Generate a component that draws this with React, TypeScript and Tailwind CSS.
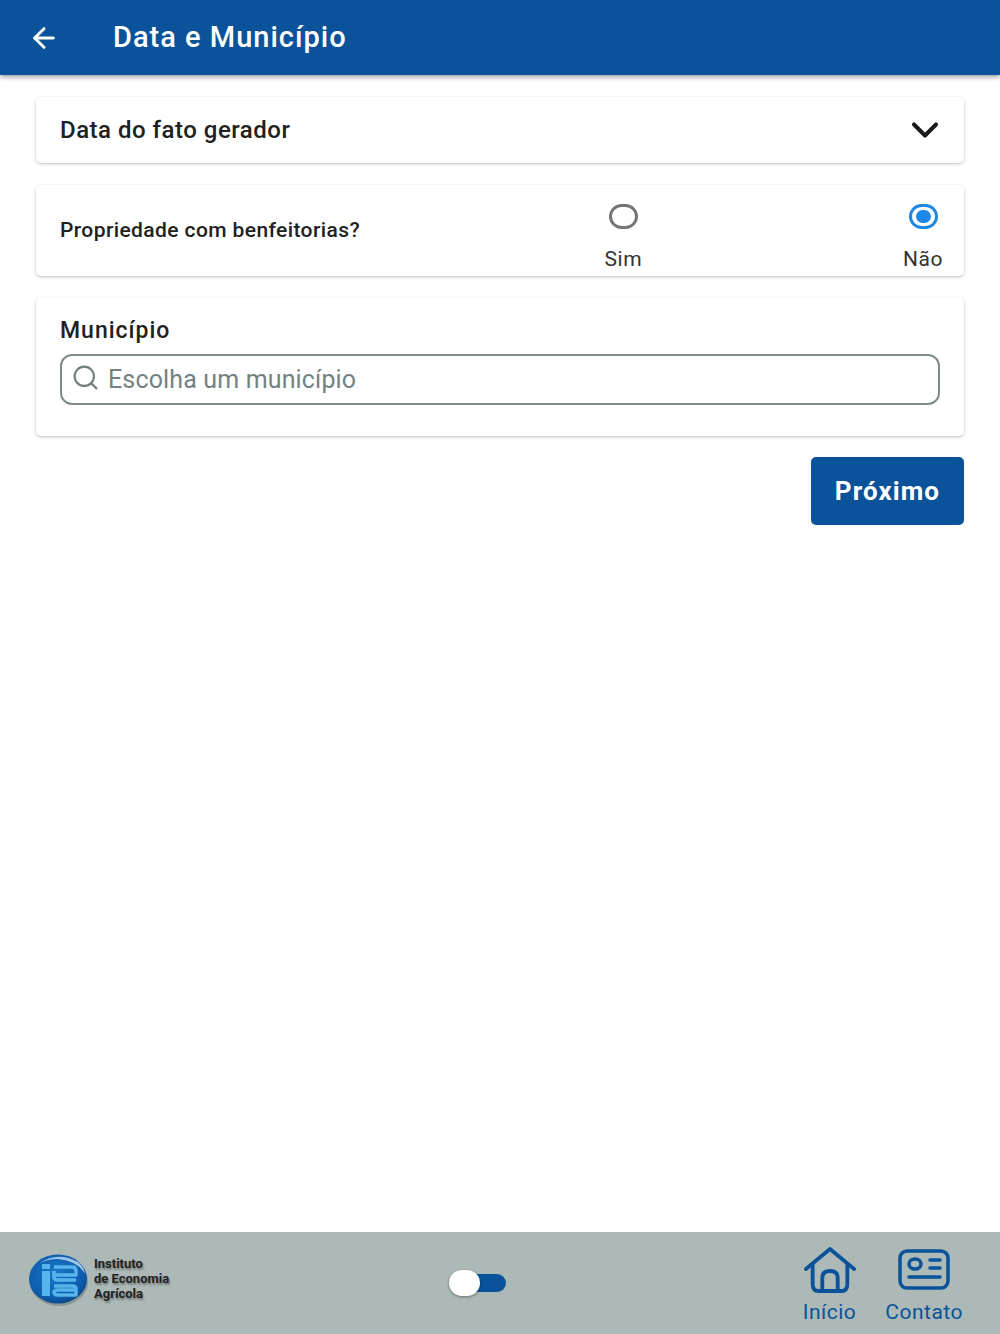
import { ArrowLeft, ChevronDown, Search } from 'lucide-react'

function Radio({ label, checked }: { label: string; checked?: boolean }) {
  return (
    <div className="flex flex-col items-center">
      {checked ? (
        <div className="w-[29px] h-[25px] rounded-full border-[3px] border-[#1e88e5] flex items-center justify-center">
          <div className="w-[15px] h-[13px] rounded-full bg-[#1e88e5]" />
        </div>
      ) : (
        <div className="w-[29px] h-[25px] rounded-full border-[3px] border-[#757575]" />
      )}
      <span className="mt-[18px] text-[21px] leading-[24px] tracking-[0.5px] text-[#333]">{label}</span>
    </div>
  )
}

function Logo() {
  return (
    <svg width="62" height="54" viewBox="0 0 62 54">
      <defs>
        <radialGradient id="ball" cx="45%" cy="40%" r="65%">
          <stop offset="0%" stopColor="#1a78c8" />
          <stop offset="75%" stopColor="#0d5cab" />
          <stop offset="100%" stopColor="#0a3f7c" />
        </radialGradient>
      </defs>
      <ellipse cx="31" cy="29" rx="29" ry="24" fill="#5f6d6b" opacity="0.45" />
      <ellipse cx="30" cy="26" rx="29" ry="24.5" fill="url(#ball)" />
      <path d="M12 10 Q30 -2 50 9 Q56 14 57 21 Q50 8 30 6 Q20 6 12 10Z" fill="#9cc4e8" />
      <g fill="none" stroke="#58b4ec" strokeWidth="3.5" strokeLinejoin="round">
        <path d="M26 14 H44 Q48 14 48 18 V22 H26 M26 18 V24 Q26 27 30 27 H48" />
        <path d="M26 33 H44 Q48 33 48 36 V42 H30 Q26 42 26 39 Q26 37 30 37 H48" />
      </g>
      <g fill="#58b4ec">
        <rect x="14" y="11" width="8" height="5" />
        <rect x="14" y="18" width="8" height="25" />
      </g>
    </svg>
  )
}

export default function App() {
  return (
    <div className="w-[1000px] h-[1334px] bg-white flex flex-col font-['Roboto',sans-serif] overflow-hidden">
      <header className="h-[75px] shrink-0 bg-[#0a5299] flex items-center pl-[28px] shadow-[0_2px_5px_rgba(0,0,0,0.4)] z-10">
        <ArrowLeft className="w-[32px] h-[32px] text-white" strokeWidth={2.2} />
        <h1 className="ml-[53px] text-[29px] leading-none font-medium text-white tracking-[1px]">Data e Município</h1>
      </header>

      <main className="flex-1 px-[36px] pt-[22px] flex flex-col">
        <section className="h-[66px] rounded-[5px] bg-white shadow-[0_1px_3px_rgba(0,0,0,0.25)] flex items-center justify-between pl-[24px] pr-[17px]">
          <span className="text-[24px] font-medium text-[#212121] tracking-[0.5px]">Data do fato gerador</span>
          <ChevronDown className="w-[44px] h-[44px] text-[#1a1a1a]" strokeWidth={2.2} />
        </section>

        <section className="mt-[22px] h-[91px] rounded-[5px] bg-white shadow-[0_1px_3px_rgba(0,0,0,0.25)] flex items-center justify-between pl-[24px] pr-[21px]">
          <span className="text-[21px] font-medium text-[#212121] tracking-[0.4px]">Propriedade com benfeitorias?</span>
          <div className="flex items-start gap-[261px] pt-[14px]">
            <Radio label="Sim" />
            <Radio label="Não" checked />
          </div>
        </section>

        <section className="mt-[22px] h-[138px] rounded-[5px] bg-white shadow-[0_1px_3px_rgba(0,0,0,0.25)] px-[24px] pt-[18px]">
          <h2 className="text-[23px] leading-[30px] font-medium text-[#212121] tracking-[1px]">Município</h2>
          <div className="mt-[8px] h-[51px] rounded-[12px] border-2 border-[#7d8c8a] flex items-center pl-[9px]">
            <Search className="w-[29px] h-[29px] text-[#74827f] -mt-[5px]" strokeWidth={1.8} />
            <span className="ml-[8px] text-[25px] tracking-[0.15px] text-[#74827f]">Escolha um município</span>
          </div>
        </section>

        <div className="mt-[21px] flex justify-end">
          <button className="w-[153px] h-[68px] rounded-[5px] bg-[#0a5299] text-white text-[26px] font-bold tracking-[1.1px]">Próximo</button>
        </div>
      </main>

      <footer className="h-[102px] shrink-0 bg-[#adb9b7] flex items-center pl-[28px] pr-[37px]">
        <div className="w-[421px] flex items-center -mt-[6px]">
          <Logo />
          <div className="ml-[4px] mb-[4px] text-[13px] leading-[15px] font-bold text-[#222] [text-shadow:1px_2px_2px_rgba(0,0,0,0.35)]">
            <div>Instituto</div>
            <div>de Economia</div>
            <div>Agrícola</div>
          </div>
        </div>
        <div className="relative w-[57px] h-[18px] rounded-full bg-[#0a5299]">
          <div className="absolute left-0 top-[-4px] w-[31px] h-[26px] rounded-full bg-white shadow-[0_1px_3px_rgba(0,0,0,0.4)]" />
        </div>
        <nav className="ml-auto flex items-start gap-[29px] pt-[6px] text-[#0a5299]">
          <div className="flex flex-col items-center">
            <svg width="52" height="46" viewBox="0 0 54 46" preserveAspectRatio="none" fill="none" stroke="currentColor" strokeWidth="4" strokeLinecap="round" strokeLinejoin="round">
              <path d="M2 22 L27 2 L52 22" />
              <path d="M9 18 V37 Q9 44 15 44 H39 Q45 44 45 37 V18" />
              <path d="M19 44 V31 Q19 24 27 24 Q35 24 35 31 V44" />
            </svg>
            <span className="mt-[6px] text-[21px] leading-[26px] tracking-[0.5px]">Início</span>
          </div>
          <div className="flex flex-col items-center">
            <svg width="52" height="46" viewBox="0 0 52 46" fill="none" stroke="currentColor" strokeWidth="3.5" strokeLinecap="round" strokeLinejoin="round">
              <rect x="2" y="4" width="48" height="37" rx="7" />
              <ellipse cx="17" cy="17" rx="6" ry="5" />
              <path d="M32 13 H42 M32 21 H42 M11 30 H42" />
            </svg>
            <span className="mt-[6px] text-[21px] leading-[26px] tracking-[0.5px]">Contato</span>
          </div>
        </nav>
      </footer>
    </div>
  )
}
